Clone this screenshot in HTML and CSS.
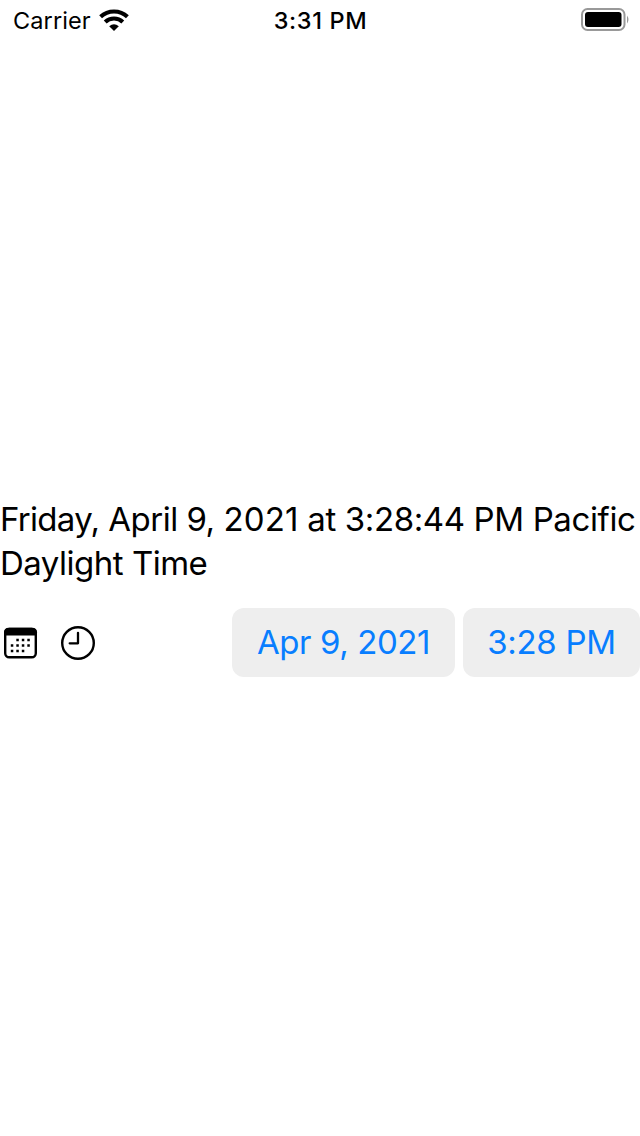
FILE: index.html
```html
<!DOCTYPE html>
<html lang="en">
<head>
<meta charset="utf-8">
<title>Date picker</title>
<link rel="stylesheet" href="styles.css">
</head>
<body>
<div class="screen">
  <header class="status">
    <div class="network"><span class="carrier">Carrier</span>
      <svg class="wifi" width="30" height="24" viewBox="0 0 30 24"><g fill="none" stroke="#000" stroke-width="4.1"><path d="M1.6 8.7C9 1.7 21 1.7 28.4 8.7"/><path d="M6.2 13.9C11 9.3 19 9.3 23.8 13.9"/></g><path d="M10.2 18.2Q15 14.2 19.8 18.2L15 23Z"/></svg>
    </div>
    <span class="clock">3:31 PM</span>
    <svg class="battery" width="49" height="24" viewBox="0 0 49 24"><rect x="1" y="1" width="42.5" height="21" rx="5.5" fill="none" stroke="#999" stroke-width="2"/><rect x="4" y="4" width="36.5" height="15" rx="3"/><path d="M46 7.5Q48.8 11.5 46 15.5Z" fill="#999"/></svg>
  </header>
  <main class="content">
    <p class="date"><span class="line line-one"><span class="weekday">Friday,</span> <span class="month">April 9,</span> <span class="year">2021</span> at 3:28:44 PM Pacific</span><span class="line line-two">Daylight Time</span></p>
    <div class="picker">
      <svg class="calendar" width="34" height="32" viewBox="0 0 34 32"><rect x="1.2" y="2" width="30.6" height="28.2" rx="4" fill="none" stroke="#000" stroke-width="2.4"/><path d="M0 8.5V5.3Q0 .8 4.8 .8H28.2Q33 .8 33 5.3V8.5Z"/><g fill="none" stroke="#000" stroke-width="2.5" stroke-dasharray="2.5 3"><path d="M12.3 12.9H26.6M6.8 18.4H26.6M6.8 23.9H21"/></g></svg>
      <svg class="time-icon" width="36" height="36" viewBox="0 0 36 36"><circle cx="18" cy="18" r="15.8" fill="none" stroke="#000" stroke-width="2.4"/><path d="M18 7.8V18.3H9.7" fill="none" stroke="#000" stroke-width="2.3" stroke-linecap="round" stroke-linejoin="round"/></svg>
      <button class="pill day"><span>Apr 9, 2021</span></button>
      <button class="pill hour"><span>3:28 PM</span></button>
    </div>
  </main>
</div>
</body>
</html>
```
FILE: styles.css
```css
* { box-sizing: border-box; }
body { margin: 0; background: #fff; color: #000; font-family: Inter, "Liberation Sans", sans-serif; }
.screen { height: 1136px; display: flex; flex-direction: column; }
.status { height: 40px; display: grid; grid-template-columns: 1fr auto 1fr; align-items: center; padding: 0 10px 0 13px; }
.network { display: flex; align-items: center; gap: 8px; font-size: 23.5px; letter-spacing: .1px; }
.clock { font-size: 23.5px; font-weight: 500; letter-spacing: .65px; padding-top: 1px; margin-right: 2px; }
.battery { justify-self: end; }
.content { padding-top: 457px; }
.date { margin: 0; font-size: 33px; line-height: 44px; }
.line { display: block; white-space: nowrap; }
.line-one { letter-spacing: -.38px; }
.line-two { letter-spacing: -.5px; }
.weekday { letter-spacing: -.7px; }
.month { letter-spacing: -.5px; }
.year { letter-spacing: .1px; }
.picker { display: flex; align-items: center; margin-top: 23px; height: 69px; padding-left: 4px; }
.time-icon { margin-left: 22px; }
.pill { height: 69px; padding: 0 0 2px; border: 0; border-radius: 12px; background: #eee; color: #087eff; font: 33px Inter, "Liberation Sans", sans-serif; white-space: nowrap; }
.day { width: 223px; margin-left: auto; letter-spacing: -.4px; }
.hour { width: 177px; margin-left: 8px; letter-spacing: -.3px; }
```
